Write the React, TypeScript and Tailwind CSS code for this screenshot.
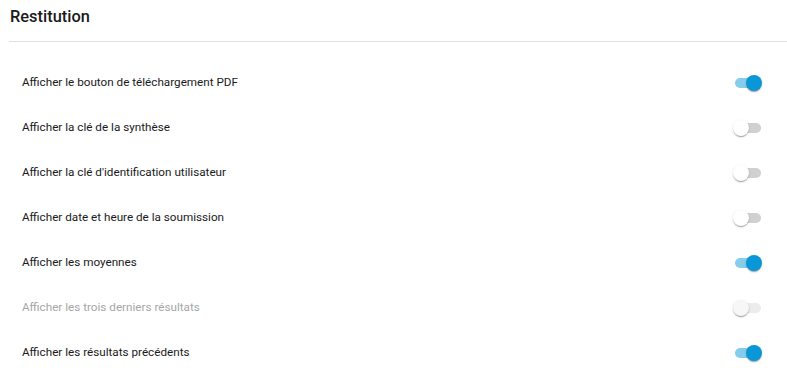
import React, { useState } from 'react'

const rows = [
  { label: 'Afficher le bouton de téléchargement PDF', on: true },
  { label: 'Afficher la clé de la synthèse', on: false },
  { label: "Afficher la clé d'identification utilisateur", on: false },
  { label: 'Afficher date et heure de la soumission', on: false },
  { label: 'Afficher les moyennes', on: true },
  { label: 'Afficher les trois derniers résultats', on: false, disabled: true },
  { label: 'Afficher les résultats précédents', on: true },
]

const Toggle = ({ on, disabled, onClick }: { on: boolean; disabled?: boolean; onClick: () => void }) => {
  const track = on ? 'bg-[#86cdec]' : disabled ? 'bg-[#ececec]' : 'bg-[#d0d0d0]'
  const thumb = on ? 'left-[18px] bg-[#0a97d8]' : disabled ? 'left-[5px] bg-[#f7f7f7]' : 'left-[5px] bg-white'
  return (
    <button
      className="relative w-[40px] h-[24px] shrink-0"
      onClick={disabled ? undefined : onClick}
    >
      <span className={`absolute left-[7px] top-[7px] w-[26px] h-[10px] rounded-full ${track}`} />
      <span
        className={`absolute top-[4px] w-[16px] h-[16px] rounded-full shadow-[0_2px_1px_-1px_rgba(0,0,0,0.2),0_1px_1px_0_rgba(0,0,0,0.14),0_1px_3px_0_rgba(0,0,0,0.12)] ${thumb}`}
      />
    </button>
  )
}

const App = () => {
  const [state, setState] = useState(rows.map(r => r.on))
  const flip = (i: number) => setState(state.map((v, j) => (j === i ? !v : v)))

  return (
    <div className="w-[787px] h-[376px] bg-white font-['Roboto',sans-serif]">
      <h1 className="px-[10px] pt-[5px] h-[33px] text-[16.4px] font-medium text-[#1a1a1a] leading-[24px]">Restitution</h1>
      <div className="ml-[9px] mt-[8px] border-t border-[#e0e0e0]" />
      <div className="pt-[18px]">
        {rows.map((r, i) => (
          <div key={r.label} className="flex items-center justify-between h-[45px] pl-[22px] pr-[19px]">
            <span className={`text-[11.7px] ${r.disabled ? 'text-[#a6a6a6]' : 'text-[#1a1a1a]'}`}>{r.label}</span>
            <Toggle on={state[i]} disabled={r.disabled} onClick={() => flip(i)} />
          </div>
        ))}
      </div>
    </div>
  )
}

export default App
